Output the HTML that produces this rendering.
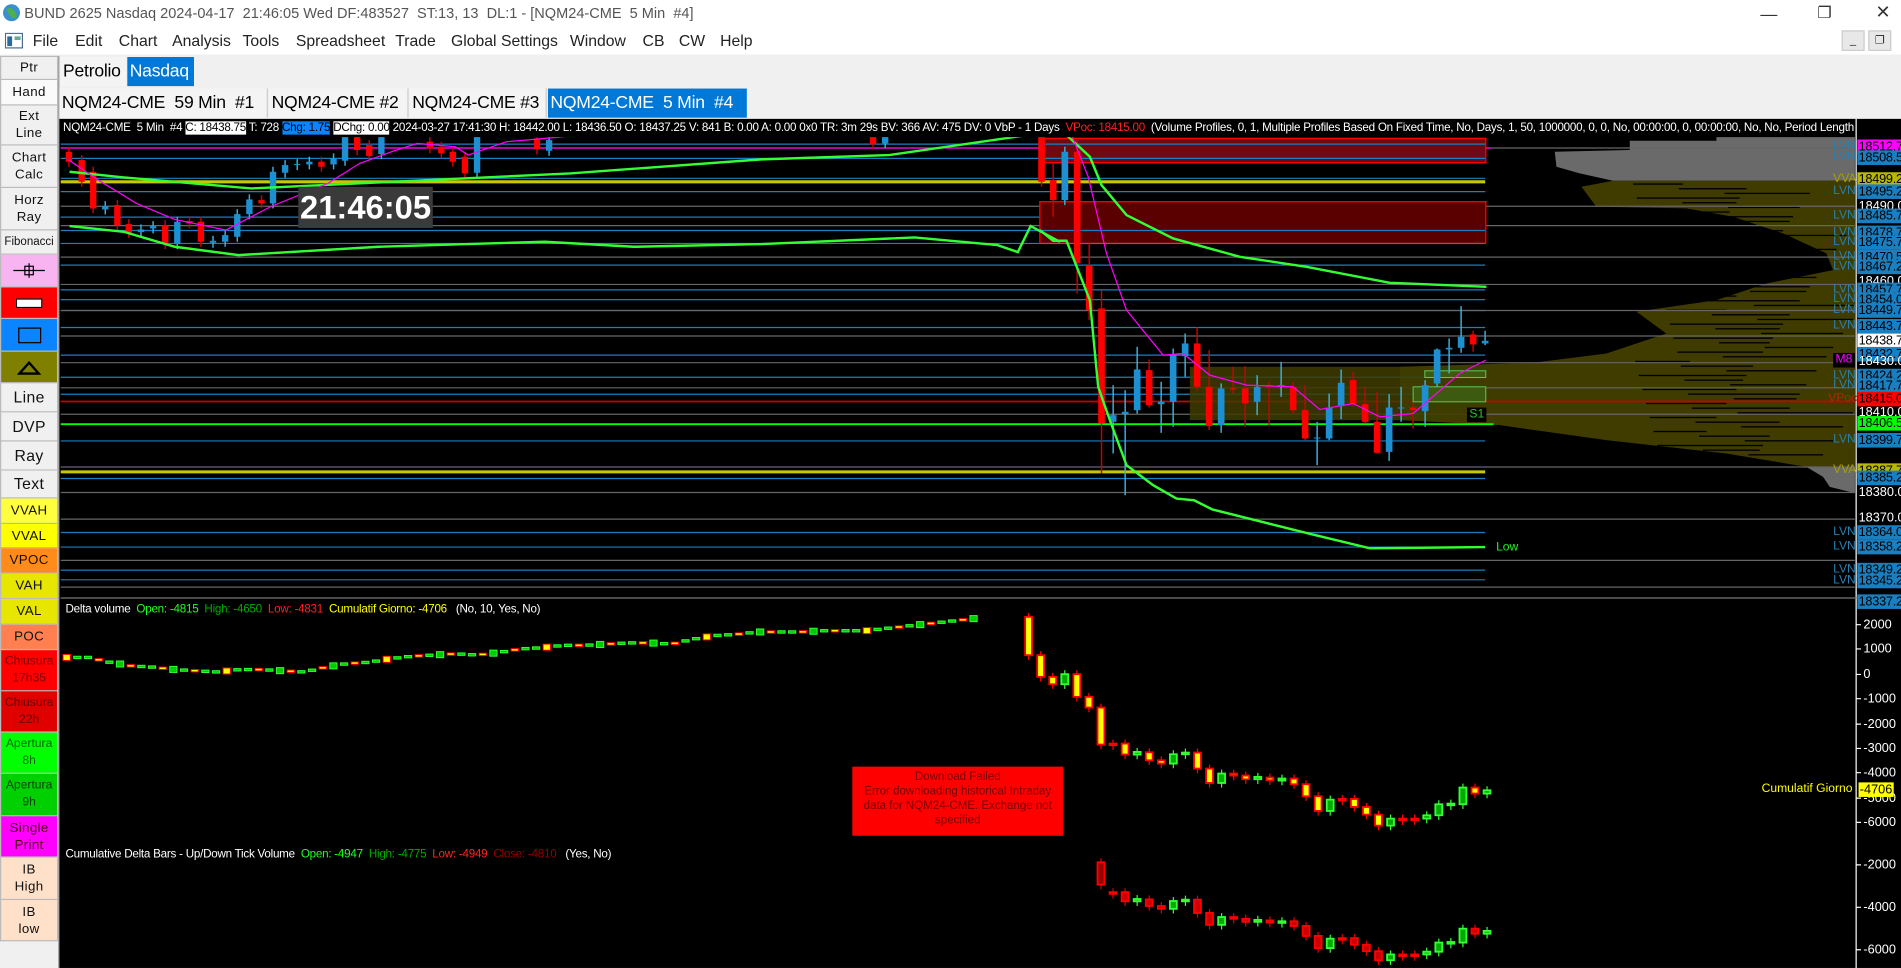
<!DOCTYPE html>
<html><head><meta charset="utf-8">
<style>
*{margin:0;padding:0;box-sizing:border-box}
html,body{width:1901px;height:968px;overflow:hidden;background:#f0f0f0;font-family:"Liberation Sans",sans-serif}
#s{position:absolute;left:0;top:0;width:1568px;height:798px;transform:scale(1.21237,1.2130);transform-origin:0 0;background:#f0f0f0}
.a{position:absolute;white-space:nowrap}
#title{left:0;top:0;width:1568px;height:22px;background:#fff;color:#555;font-size:12px;line-height:22px;padding-left:20px}
#menu{left:0;top:22px;width:1568px;height:23px;background:#fff;font-size:13px;line-height:23px;color:#222}
#menu span{position:absolute;top:0}
.side{position:absolute;left:0;width:48px;border:1px solid #bbb;border-top:none;font-size:11px;text-align:center;display:flex;align-items:center;justify-content:center;line-height:14px;color:#111;letter-spacing:0.3px;overflow:hidden}
.tab{position:absolute;height:24px;font-size:14.5px;line-height:24px;padding:0 2px;color:#000;background:#f4f4f4;white-space:nowrap;overflow:hidden;letter-spacing:-0.2px}
.on{background:#0078d7;color:#fff}
.hd{position:absolute;font-size:9.6px;line-height:14px;color:#fff;letter-spacing:-0.2px;white-space:nowrap}
.pl{position:absolute;left:1532px;width:36px;height:12px;font-size:10.5px;line-height:12px;color:#000;padding-left:1px;overflow:hidden;letter-spacing:-0.2px}
.ax{position:absolute;left:1533px;font-size:10.5px;color:#fff;line-height:12px}
.lvn{position:absolute;left:1512px;font-size:10px;color:#2a7fb0;line-height:12px}
</style></head><body>
<div id="s">
<div id="title" class="a"><svg style="position:absolute;left:2px;top:3px" width="15" height="15"><circle cx="7.5" cy="7.5" r="7" fill="#3a8fd0"/><path d="M3 5q3-3 6 0t3 6q-3 2-5 0z" fill="#4caf50"/></svg>BUND 2625 Nasdaq 2024-04-17&nbsp; 21:46:05 Wed DF:483527&nbsp; ST:13, 13&nbsp; DL:1 - [NQM24-CME&nbsp; 5 Min&nbsp; #4]
<span style="position:absolute;left:1452px;top:0;font-size:14px;color:#333">&#8212;</span>
<span style="position:absolute;left:1499px;top:0;font-size:13px;color:#333">&#10064;</span>
<span style="position:absolute;left:1547px;top:0;font-size:15px;color:#333">&#10005;</span>
</div>
<div id="menu" class="a">
<svg style="position:absolute;left:4px;top:5px" width="15" height="13"><rect x="0.5" y="0.5" width="14" height="12" fill="#fff" stroke="#4a6a8a"/><rect x="2" y="3" width="4" height="8" fill="#2a6aa0"/><rect x="8" y="3" width="5" height="3" fill="#6a9"/></svg>
<span style="left:27px">File</span><span style="left:62px">Edit</span><span style="left:98px">Chart</span><span style="left:142px">Analysis</span><span style="left:200px">Tools</span><span style="left:244px">Spreadsheet</span><span style="left:326px">Trade</span><span style="left:372px">Global Settings</span><span style="left:470px">Window</span><span style="left:530px">CB</span><span style="left:560px">CW</span><span style="left:594px">Help</span>
<div style="position:absolute;left:1519px;top:3px;width:19px;height:17px;background:#e8e8e8;border:1px solid #ccc;font-size:9px;text-align:center;line-height:15px">_</div>
<div style="position:absolute;left:1541px;top:3px;width:19px;height:17px;background:#e8e8e8;border:1px solid #ccc;font-size:9px;text-align:center;line-height:15px">&#10064;</div>
</div>
<div class="side" style="top:46px;height:20px;background:#f0f0f0;border-top:1px solid #bbb">Ptr</div>
<div class="side" style="top:66px;height:21px;background:#fafafa">Hand</div>
<div class="side" style="top:87px;height:33px;background:#f0f0f0">Ext<br>Line</div>
<div class="side" style="top:120px;height:35px;background:#f0f0f0">Chart<br>Calc</div>
<div class="side" style="top:155px;height:35px;background:#f0f0f0">Horz<br>Ray</div>
<div class="side" style="top:190px;height:20px;background:#f0f0f0;font-size:9.5px;letter-spacing:0">Fibonacci</div>
<div class="side" style="top:210px;height:27px;background:#f8b4f0"><svg width="28" height="14"><path d="M1 7H27M14 1V13" stroke="#000"/><rect x="10.5" y="3.5" width="7" height="7" fill="none" stroke="#000"/></svg></div>
<div class="side" style="top:237px;height:26px;background:#ff0000"><div style="width:22px;height:8px;background:#fff;border:1px solid #000"></div></div>
<div class="side" style="top:263px;height:27px;background:#0a84ff"><div style="width:19px;height:13px;border:1.5px solid #000"></div></div>
<div class="side" style="top:290px;height:26px;background:#808000"><svg width="20" height="12"><path d="M2 11L10 2L18 11Z" fill="none" stroke="#000" stroke-width="2"/></svg></div>
<div class="side" style="top:316px;height:24px;background:#f0f0f0;font-size:13px">Line</div>
<div class="side" style="top:340px;height:24px;background:#f0f0f0;font-size:13px">DVP</div>
<div class="side" style="top:364px;height:24px;background:#f0f0f0;font-size:13px">Ray</div>
<div class="side" style="top:388px;height:23px;background:#f0f0f0;font-size:13px">Text</div>
<div class="side" style="top:411px;height:21px;background:#ffff40">VVAH</div>
<div class="side" style="top:432px;height:20px;background:#ffff00">VVAL</div>
<div class="side" style="top:452px;height:21px;background:#ff8c1a">VPOC</div>
<div class="side" style="top:473px;height:21px;background:#e6e600">VAH</div>
<div class="side" style="top:494px;height:21px;background:#e6e600">VAL</div>
<div class="side" style="top:515px;height:21px;background:#ff7f50">POC</div>
<div class="side" style="top:536px;height:34px;background:#ff0000;color:#700;font-size:10px;letter-spacing:0">Chiusura<br>17h35</div>
<div class="side" style="top:570px;height:34px;background:#e00000;color:#600;font-size:10px;letter-spacing:0">Chiusura<br>22h</div>
<div class="side" style="top:604px;height:34px;background:#00ff00;color:#060;font-size:10px;letter-spacing:0">Apertura<br>8h</div>
<div class="side" style="top:638px;height:35px;background:#00d000;color:#040;font-size:10px;letter-spacing:0">Apertura<br>9h</div>
<div class="side" style="top:673px;height:34px;background:#ff00ff;color:#400">Single<br>Print</div>
<div class="side" style="top:707px;height:35px;background:#ffe0c8">IB<br>High</div>
<div class="side" style="top:742px;height:34px;background:#ffe0c8">IB<br>low</div>
<div style="position:absolute;left:48px;top:46px;width:1px;height:752px;background:#999"></div>
<div class="tab" style="left:50px;top:47px;width:54px">Petrolio</div>
<div class="tab on" style="left:105px;top:47px;width:55px">Nasdaq</div>
<div class="tab" style="left:49px;top:73px;width:172px;border-right:1px solid #ccc">NQM24-CME&nbsp; 59 Min&nbsp; #1</div>
<div class="tab" style="left:222px;top:73px;width:115px;border-right:1px solid #ccc">NQM24-CME #2</div>
<div class="tab" style="left:338px;top:73px;width:113px;border-right:1px solid #ccc">NQM24-CME #3</div>
<div class="tab on" style="left:452px;top:73px;width:164px">NQM24-CME&nbsp; 5 Min&nbsp; #4</div>

<div style="position:absolute;left:49px;top:98px;width:1519px;height:700px;background:#000"></div>
<svg id="sv" style="position:absolute;left:0;top:0" width="1568" height="798" viewBox="0 0 1568 798">
<defs><clipPath id="cp"><rect x="50" y="113" width="1480" height="380"/></clipPath></defs>
<g id="main" clip-path="url(#cp)"></g>
<g id="low"></g>
<line x1="1531" y1="98" x2="1531" y2="798" stroke="#fff" stroke-width="1"/>
<line x1="50" y1="493" x2="1568" y2="493" stroke="#777" stroke-width="1"/>
<g stroke="#fff" stroke-width="1"><path d="M1531 515h4M1531 535h4M1531 556h4M1531 576h4M1531 597h4M1531 617h4M1531 637h4M1531 658h4M1531 678h4M1531 713h4M1531 748h4M1531 783h4"/></g>
</svg>
<div class="hd" style="left:52px;top:99px;width:1478px;overflow:hidden">NQM24-CME&nbsp; 5 Min&nbsp; #4 <span style="background:#fff;color:#000">C: 18438.75</span> T: 728 <span style="background:#0a84ff;color:#000">Chg: 1.75</span> <span style="background:#fff;color:#000">DChg: 0.00</span> 2024-03-27 17:41:30 H: 18442.00 L: 18436.50 O: 18437.25 V: 841 B: 0.00 A: 0.00 0x0 TR: 3m 29s BV: 366 AV: 475 DV: 0 VbP - 1 Days&nbsp; <span style="color:#ff2020">VPoc: 18415.00</span>&nbsp; (Volume Profiles, 0, 1, Multiple Profiles Based On Fixed Time, No, Days, 1, 50, 1000000, 0, 0, No, 00:00:00, 0, 00:00:00, No, No, Period Length</div>
<div class="a" style="left:246px;top:154px;width:111px;height:34px;background:#3a3a3a;color:#fff;font-size:27px;font-weight:bold;line-height:34px;text-align:center">21:46:05</div>
<div class="a" style="left:1210px;top:336px;background:#000;color:#2c2;font-size:10px;line-height:12px;padding:0 2px">S1</div>
<div class="a" style="left:1234px;top:446px;color:#2e2;font-size:10px">Low</div>
<div class="a" style="left:1512px;top:291px;background:#000;color:#f0f;font-size:10px;line-height:12px;padding:0 2px">M8</div>
<div id="labels"></div>
<div class="hd" style="left:54px;top:496px">Delta volume&nbsp; <span style="color:#2f2">Open: -4815</span>&nbsp; <span style="color:#0a0">High: -4650</span>&nbsp; <span style="color:#f22">Low: -4831</span>&nbsp; <span style="color:#ff0">Cumulatif Giorno: -4706</span>&nbsp;&nbsp; (No, 10, Yes, No)</div>
<div class="hd" style="left:54px;top:698px">Cumulative Delta Bars - Up/Down Tick Volume&nbsp; <span style="color:#2f2">Open: -4947</span>&nbsp; <span style="color:#0a0">High: -4775</span>&nbsp; <span style="color:#f22">Low: -4949</span>&nbsp; <span style="color:#900">Close: -4810</span>&nbsp;&nbsp; (Yes, No)</div>
<div class="a" style="left:703px;top:632px;width:174px;height:57px;background:#ff0000;color:#700;font-size:9.5px;line-height:12px;text-align:center;white-space:normal;padding:3px 4px">Download Failed<br>Error downloading historical Intraday data for NQM24-CME. Exchange not specified</div>
<div class="a" style="left:1453px;top:645px;color:#ff0;font-size:10px">Cumulatif Giorno</div>
<div class="a" style="left:1533px;top:645px;background:#ff0;color:#000;font-size:10.5px;padding:0 1px;line-height:12px">-4706</div>
</div>
<script>
var M=document.getElementById('main'),L=document.getElementById('low'),s='';
function ln(y,c,x2,w){s+='<line x1="50" y1="'+y+'" x2="'+(x2||1225)+'" y2="'+y+'" stroke="'+c+'" stroke-width="'+(w||1)+'"/>';}
var pg='<g transform="matrix(0.2749,0,0,0.2749,1154.6,98.97)">';
pg+='<polygon fill="#6a6a6a" points="1370,50 950,50 950,62 690,62 690,90 465,95 470,140 540,160 640,182 1370,182"/>';
pg+='<polygon fill="#403c00" points="1370,182 640,182 545,200 590,260 860,265 1000,290 1150,340 1280,400 1300,450 1100,490 950,540 710,575 800,640 620,700 400,728 0,740 0,900 300,915 620,960 980,1000 1220,1040 1370,1040"/>';
pg+='<polygon fill="#6a6a6a" points="1370,1040 1220,1040 1270,1070 1290,1100 1370,1120"/>';
for(var i=0;i<60;i++){var y=190+i*14,x=700+((i*137)%400);pg+='<rect x="'+x+'" y="'+y+'" width="'+(150+(i*53)%200)+'" height="4" fill="#000"/>';}
pg+='</g>';
s+=pg;
var blue='#1a7fc0',grey='#666';
[118.8,130.6,147,158,179,190,200.7,218.6,239,247,256,270,292.8,311,325,363.5,394.5,439,451,470,478].forEach(function(y){ln(y,blue)});
[122,170,186,212,234.5,256,277,299,319.7,341.5,385,406,428,462,484].forEach(function(y){ln(y,grey,1530)});
ln(149.9,'#c8c800',1225,2.5);ln(389,'#c8c800',1225,2.5);
ln(331,'#c00',1530,1.5);ln(349.7,'#0f0',1232,1.5);
ln(122,'#f0f',1230,1);
function g6(){return '<g transform="matrix(0.2749,0,0,0.2749,857.7,98.97)">'}
s+=g6()+'<rect x="0" y="55" width="1338" height="73" fill="#6e0a14" stroke="#f00" stroke-width="4"/><rect x="0" y="245" width="1338" height="125" fill="#5a0000" stroke="#f00" stroke-width="4"/>';
s+='<rect x="450" y="740" width="890" height="160" fill="#403c00" opacity="0.85"/>';
s+='<rect x="1155" y="752" width="183" height="20" fill="#3c5a10" stroke="#5c5" stroke-width="3"/><rect x="1120" y="800" width="218" height="45" fill="#3c5a10" stroke="#5c5" stroke-width="3"/></g>';
[118.8,130.6,190,200.7].forEach(function(y){s+='<line x1="858" y1="'+y+'" x2="1225" y2="'+y+'" stroke="'+blue+'"/>'});
function cand(tr,arr,w,up,dn,upw,dnw){var o='<g transform="'+tr+'">';arr.forEach(function(c){var x=c[0],a=c[1],b=c[2],t=Math.min(a,b),h=Math.max(Math.abs(b-a),3),red=c[3];var hi=c[4]!=null?c[4]:t-15,lo=c[5]!=null?c[5]:t+h+15;
o+='<line x1="'+x+'" y1="'+hi+'" x2="'+x+'" y2="'+lo+'" stroke="'+(red?dnw:upw)+'" stroke-width="1.2" vector-effect="non-scaling-stroke"/>';
o+='<rect x="'+(x-w/2)+'" y="'+t+'" width="'+w+'" height="'+h+'" fill="'+(red?dn:up)+'"/>';});return o+'</g>';}
var c4=[[14,95,125,1],[34,120,185,1],[52,155,265,1],[71,258,268,0],[90,255,315,1],[108,312,338,1],[127,328,336,0],[146,318,325,0],[165,315,372,1],[184,305,372,0],[203,303,310,1],[221,305,365,1],[240,362,368,0],[259,345,365,0],[278,282,350,0],[297,238,282,0],[316,240,250,1],[334,155,250,0],[353,135,158,0],[372,132,135,0],[391,125,133,0],[410,125,140,1],[429,115,133,0],[447,50,122,0],[466,50,90,1],[485,75,108,1],[504,50,102,0],[580,65,85,1],[598,80,100,1],[616,95,125,1],[635,110,160,1],[654,50,158,0],[748,55,88,1],[767,60,92,0],[1275,50,73,1],[1294,50,70,0]];
s+=cand('matrix(0.526,0,0,0.2749,49.48,98.97)',c4,10,'#1e8fd0','#f00','#3ab0e0','#c00');
var c6=[[5,50,185,1],[40,180,240,1,130,290],[75,95,240,0],[112,95,430,1,60,520],[148,435,570,1,370,600],[185,565,910,1,510,1060],[220,885,905,0,795,1000],[256,875,882,0,810,1125],[292,748,870,0,680,880],[328,750,855,1,718,862],[364,845,852,0,785,938],[400,705,845,0,685,920],[436,670,708,0,640,770],[472,670,800,1,622,810],[508,800,918,1,690,930],[544,805,915,0,790,938],[580,805,808,1,740,820],[616,805,850,1,738,920],[652,800,845,0,765,885],[688,795,800,1,785,918],[724,795,800,0,725,830],[760,800,870,1,785,880],[796,870,955,1,795,960],[832,952,952,0,905,1035],[868,862,955,0,820,960],[904,788,858,0,748,897],[940,780,850,1,755,860],[976,852,905,1,800,910],[1012,905,998,1,815,1000],[1048,862,995,0,822,1022],[1084,862,862,0,800,905],[1120,862,870,1,850,925],[1156,795,873,0,780,920],[1192,688,790,0,685,800],[1228,683,688,0,655,760],[1264,650,683,0,558,698],[1300,643,673,1,632,695],[1336,662,670,0,632,675]];
s+=cand('matrix(0.2749,0,0,0.2749,857.7,98.97)',c6,20,'#1e8fd0','#f00','#3ab0e0','#c00');
function pl(tr,pts,c,w){s+='<polyline transform="'+tr+'" points="'+pts+'" fill="none" stroke="'+c+'" stroke-width="'+w+'" vector-effect="non-scaling-stroke"/>';}
var t4='matrix(0.526,0,0,0.2749,49.48,98.97)',t6='matrix(0.2749,0,0,0.2749,857.7,98.97)';
pl(t4,'15,155 100,172 300,205 500,187 800,160 1100,118 1300,105 1500,50 1568,30','#3f3',2);
pl(t4,'15,318 100,335 180,380 280,405 500,380 760,365 900,380 1100,372 1340,352 1470,375 1502,396 1522,318 1568,365','#3f3',2);
pl(t4,'14,120 60,180 120,250 180,298 260,330 330,260 420,190 470,130 520,95 560,70 620,80 640,105 700,65 790,50','#f0f',1);
pl(t6,'60,20 80,45 150,110 185,195 260,285 400,355 600,410 800,440 1050,488 1340,500','#3f3',2);
pl(t6,'0,330 40,362 80,362 150,540 175,800 210,900 260,1035 340,1095 410,1135 460,1140','#3f3',2);
pl('','984,412 1000,420 1040,430 1080,440 1130,452 1225,451','#3f3',2);
pl(t6,'90,30 145,170 200,400 260,570 370,705 430,700 510,765 620,795 760,800 840,868 940,850 1020,890 1120,880 1260,760 1338,720','#f0f',1);
M.innerHTML=s;
var o='';
var dy=[542,542,546,549,550,552,553,554,552,552,553,554,550,547,546,543,541,540,539,540,538,535,534,532,532,531,530,530,531,527,524,523,521,521,521,520,520,520,518,516,514,512,510];
for(var i=0;i<86;i++){var f=i/85*(dy.length-1),k=Math.floor(f),v=dy[k]+(dy[Math.min(k+1,dy.length-1)]-dy[k])*(f-k);var x=55+i*8.8;var g=(i*7)%3!=0;var h=(i%5==0)?5:2;
o+='<rect x="'+(x-3)+'" y="'+(v-h/2)+'" width="6" height="'+h+'" fill="'+(g?'#0c0':'#ff0')+'" stroke="'+(g?'#3f3':'#f00')+'" stroke-width="0.8"/>';}
var d5=[[50,165],[165,230],[230,252],[252,222],[222,290],[290,322],[322,433],[430,433],[430,463],[463,455],[456,480],[480,490],[490,462],[460,457],[457,505],[505,548],[548,520],[520,526],[526,537],[537,530],[532,540],[541,535],[535,552],[552,588],[588,632],[632,598],[596,598],[596,620],[620,643],[643,676],[676,655],[655,656],[655,656],[655,645],[645,612],[612,610],[612,562],[562,580],[580,570]];
var t5='matrix(0.4739,0,0,0.2749,824.7,494.8)';o+='<g transform="'+t5+'">';
d5.forEach(function(c,i){var x=50+i*21,a=c[0],b=c[1],t=Math.min(a,b),h=Math.max(Math.abs(b-a),5),dn=b>a;
o+='<line x1="'+x+'" y1="'+(t-12)+'" x2="'+x+'" y2="'+(t+h+14)+'" stroke="'+(dn?'#f00':'#3f3')+'" vector-effect="non-scaling-stroke"/>';
o+='<rect x="'+(x-6)+'" y="'+t+'" width="12" height="'+h+'" fill="'+(dn?'#ff0':'#0a0')+'" stroke="'+(dn?'#f00':'#3f3')+'" stroke-width="1.5" vector-effect="non-scaling-stroke"/>';
if(i>=6){var ca=786+(a-322)*0.83,cb=786+(b-322)*0.83;if(i==6){ca=786;cb=853;}var ct=Math.min(ca,cb),ch=Math.max(Math.abs(cb-ca),5);
o+='<line x1="'+x+'" y1="'+(ct-12)+'" x2="'+x+'" y2="'+(ct+ch+14)+'" stroke="'+(dn?'#d00':'#3f3')+'" vector-effect="non-scaling-stroke"/>';
o+='<rect x="'+(x-6)+'" y="'+ct+'" width="12" height="'+ch+'" fill="'+(dn?(i==6?'#900':'#c00'):'#0a0')+'" stroke="'+(dn?'#f00':'#3f3')+'" stroke-width="1.5" vector-effect="non-scaling-stroke"/>';}
});o+='</g>';
L.innerHTML=o;
var lb='',P=[[121,'18512.7','#f0f'],[130,'18508.5','#1a7fc0'],[148,'18499.2','#b8b800'],[158,'18495.2','#1a7fc0'],[170,'18490.0',''],[178,'18485.7','#1a7fc0'],[192,'18478.7','#1a7fc0'],[200,'18475.7','#1a7fc0'],[212,'18470.5','#1a7fc0'],[220,'18467.2','#1a7fc0'],[232,'18460.0',''],[239,'18457.7','#1a7fc0'],[247,'18454.0','#1a7fc0'],[256,'18449.7','#1a7fc0'],[269,'18443.7','#1a7fc0'],[281,'18438.7','#fff'],[292,'18432.7','#1a7fc0'],[298,'18430.0',''],[310,'18424.2','#1a7fc0'],[318,'18417.7','#1a7fc0'],[329,'18415.0','#f00'],[340,'18410.0',''],[349,'18406.5','#0f0'],[363,'18399.7','#1a7fc0'],[388,'18387.7','#b8b800'],[394,'18385.2','#1a7fc0'],[406,'18380.0',''],[427,'18370.0',''],[439,'18364.0','#1a7fc0'],[451,'18358.2','#1a7fc0'],[470,'18349.2','#1a7fc0'],[479,'18345.2','#1a7fc0'],[496,'18337.2','#1a7fc0']];
P.forEach(function(p){if(p[2])lb+='<div class="pl" style="top:'+(p[0]-6)+'px;background:'+p[2]+'">'+p[1]+'</div>';else lb+='<div class="ax" style="top:'+(p[0]-6)+'px">'+p[1]+'</div>';});
[121,130,148,158,178,192,200,212,220,239,247,256,269,310,318,363,388,439,451,470,479].forEach(function(y,i){var t=(y==148||y==388)?'VVA':'LVN';lb+='<div class="lvn" style="top:'+(y-6)+'px;'+(t=='VVA'?'color:#a8a000':'')+'">'+t+'</div>';});
lb+='<div class="lvn" style="top:323px;left:1508px;color:#c02000">VPoc</div>';
[[515,'2000'],[535,'1000'],[556,'0'],[576,'-1000'],[597,'-2000'],[617,'-3000'],[637,'-4000'],[658,'-5000'],[678,'-6000'],[713,'-2000'],[748,'-4000'],[783,'-6000']].forEach(function(a){lb+='<div class="ax" style="left:1537px;top:'+(a[0]-6)+'px">'+a[1]+'</div>';});
document.getElementById('labels').innerHTML=lb;
</script>
</body></html>
